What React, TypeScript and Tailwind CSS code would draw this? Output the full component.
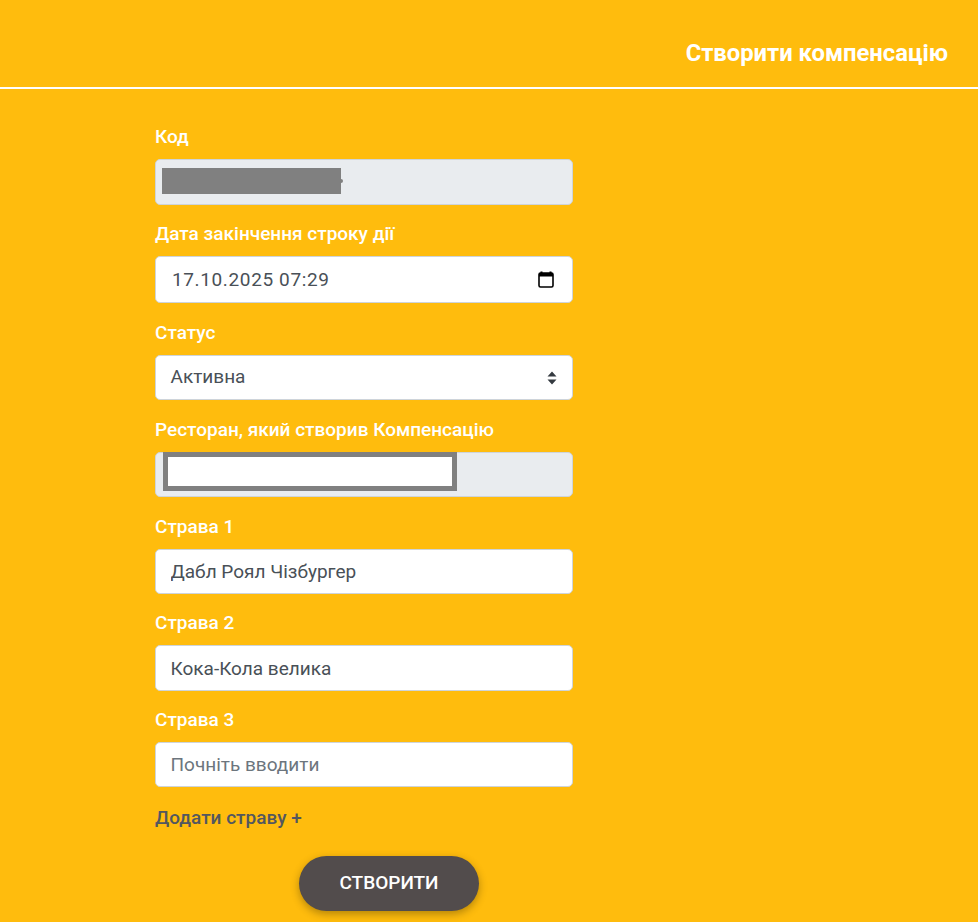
const font = "font-['Roboto',sans-serif]";

const inputBox =
  "flex items-center w-full bg-white border border-[#ced4da] rounded-[5px] pl-[14.5px] pr-[15px] text-[19px] leading-[27px] text-[#495057]";

function Label({ children }: { children: string }) {
  return <label className="block h-[24px] text-[19px] leading-[24px] font-medium text-white">{children}</label>;
}

function Field({ label, mt, children }: { label: string; mt: string; children: React.ReactNode }) {
  return (
    <div className={mt}>
      <Label>{label}</Label>
      {children}
    </div>
  );
}

function CalendarIcon() {
  return (
    <svg width="16" height="17" viewBox="0 0 16 17" className="shrink-0" fill="none">
      <path d="M3.5 0.5v2M12.5 0.5v2" stroke="#000" strokeWidth="2" />
      <rect x="1" y="2" width="14" height="14" rx="1.5" stroke="#000" strokeWidth="1.6" />
      <rect x="1" y="2" width="14" height="3.5" fill="#000" />
    </svg>
  );
}

function SelectArrows() {
  return (
    <svg width="10" height="14" viewBox="0 0 10 14" className="shrink-0">
      <path d="M5 0.5 L9.5 5.5 H0.5 Z M5 13.5 L0.5 8.5 H9.5 Z" fill="#343a40" />
    </svg>
  );
}

export default function App() {
  return (
    <div className={`${font} h-[922px] overflow-hidden bg-[#ffbc0d]`}>
      <header className="flex items-end justify-end h-[89px] border-b-2 border-white pr-[30px] pb-[20px]">
        <h1 className="text-[23.8px] leading-[28px] font-bold text-white">Створити компенсацію</h1>
      </header>

      <form className="ml-[155px] w-[418px] pt-[36px]">
        <Field label="Код" mt="">
          <div className="relative mt-[10px] h-[46px] bg-[#e9ecef] border border-[#ced4da] rounded-[5px]">
            <div className="absolute left-[6px] top-[8px] w-[179px] h-[26px] bg-[#808080]" />
            <div className="absolute left-[185px] top-[19px] w-[2px] h-[4px] rounded-r-full bg-[#808080]" />
          </div>
        </Field>

        <Field label="Дата закінчення строку дії" mt="mt-[17px]">
          <div className={`${inputBox} mt-[10px] h-[47px] justify-between !pl-[16px] !pr-[18px] tracking-[0.63px]`}>
            <span>17.10.2025 07:29</span>
            <CalendarIcon />
          </div>
        </Field>

        <Field label="Статус" mt="mt-[18px]">
          <div className={`${inputBox} mt-[10px] h-[45px] justify-between`}>
            <span className="-mt-[2px]">Активна</span>
            <SelectArrows />
          </div>
        </Field>

        <Field label="Ресторан, який створив Компенсацію" mt="mt-[18px]">
          <div className="relative mt-[10px] h-[45px] bg-[#e9ecef] border border-[#ced4da] rounded-[5px]">
            <div className="absolute left-[7px] -top-px w-[294px] h-[39px] bg-white border-[5px] border-[#808080]" />
          </div>
        </Field>

        <Field label="Страва 1" mt="mt-[18px]">
          <input readOnly value="Дабл Роял Чізбургер" className={`${inputBox} mt-[10px] h-[45px] outline-none`} />
        </Field>

        <Field label="Страва 2" mt="mt-[17px]">
          <input readOnly value="Кока-Кола велика" className={`${inputBox} mt-[10px] h-[46px] outline-none`} />
        </Field>

        <Field label="Страва 3" mt="mt-[17px]">
          <input
            readOnly
            placeholder="Почніть вводити"
            className={`${inputBox} mt-[10px] h-[45px] pb-[1px] outline-none placeholder:text-[#6c757d]`}
          />
        </Field>

        <div className="mt-[19px] text-[19px] leading-[24px] font-medium text-[#53575f]">Додати страву +</div>

        <div className="flex justify-center mt-[26px] pl-[50px]">
          <button
            type="button"
            className="w-[180px] h-[55px] rounded-[28px] bg-[#524c4c] text-white text-[19px] font-medium shadow-[0_3px_8px_rgba(0,0,0,0.3)]"
          >
            СТВОРИТИ
          </button>
        </div>
      </form>
    </div>
  );
}
